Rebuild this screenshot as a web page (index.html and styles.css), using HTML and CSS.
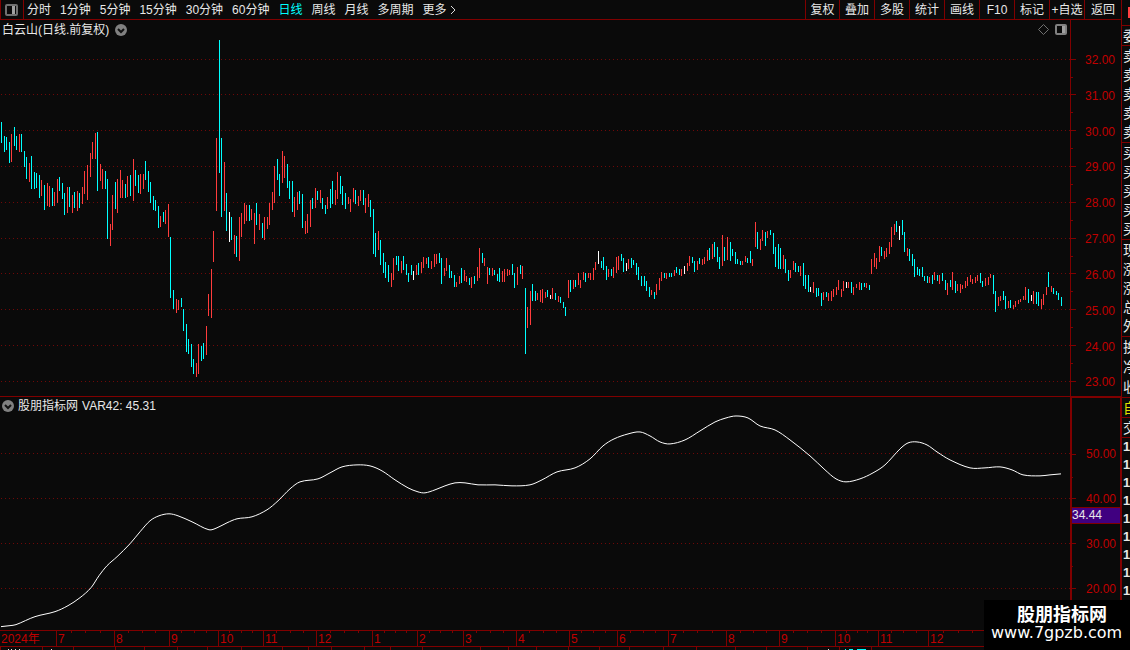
FILE: index.html
```
<!DOCTYPE html>
<html lang="zh-CN">
<head>
    <meta charset="UTF-8">
    <title>白云山 日线</title>
    <link rel="stylesheet" href="styles.css">
</head>
<body>
    <div class="app">
        <div class="main">
            <header class="toolbar">
                <button class="layout-btn" aria-label="Layout">
                    <svg width="13" height="12" viewBox="0 0 13 12"><rect x="1" y="1" width="11" height="10" rx="1" fill="none" stroke="#707070" stroke-width="2"/><rect x="7" y="2" width="3" height="8" fill="#a0a0a0"/></svg>
                </button>
                <nav class="periods">
                    <button>分时</button>
                    <button>1分钟</button>
                    <button>5分钟</button>
                    <button>15分钟</button>
                    <button>30分钟</button>
                    <button>60分钟</button>
                    <button class="active">日线</button>
                    <button>周线</button>
                    <button>月线</button>
                    <button>多周期</button>
                    <button class="more">更多<svg width="6" height="10" viewBox="0 0 6 10"><path d="M1 1L5 5L1 9" fill="none" stroke="#dcdcdc"/></svg></button>
                </nav>
                <nav class="tools">
                    <button>复权</button>
                    <button>叠加</button>
                    <button>多股</button>
                    <button>统计</button>
                    <button>画线</button>
                    <button>F10</button>
                    <button>标记</button>
                    <button>+自选</button>
                    <button>返回</button>
                </nav>
            </header>

            <section class="pane price">
                <div class="plot">
                    <svg class="chart" viewBox="0 20 1070 376" preserveAspectRatio="none">
                        <defs>
                            <pattern id="dots" width="4" height="1" patternUnits="userSpaceOnUse"><rect x="1" width="1" height="1" fill="#700808"/></pattern>
                        </defs>
                        <g id="price-grid"></g>
                        <path id="up" class="up"/>
                        <path id="down" class="down"/>
                        <path id="flat" class="flat"/>
                    </svg>
                    <div class="pane-head">
                        <span>白云山(日线.前复权)</span>
                        <button class="fold" aria-label="Options"><svg width="12" height="12" viewBox="0 0 12 12"><circle cx="6" cy="6" r="6" fill="#808080"/><path d="M3 5L6 8L9 5" fill="none" stroke="#111" stroke-width="2"/></svg></button>
                        <span class="spacer"></span>
                        <svg width="11" height="11" viewBox="0 0 11 11"><path d="M5.5 .5L10.500 5.500L5.500 10.500L.5 5.500Z" fill="none" stroke="#707070"/></svg>
                        <svg width="12" height="11" viewBox="0 0 12 11"><rect x="1" y="1" width="10" height="9" rx="1" fill="none" stroke="#808080" stroke-width="2"/><rect x="7" y="2" width="3" height="7" fill="#a0a0a0"/></svg>
                    </div>
                </div>
                <div class="axis">
                    <svg class="ticks" id="price-ticks" viewBox="0 20 5 376" preserveAspectRatio="none"></svg>
                    <span>32.00</span><span>31.00</span><span>30.00</span><span>29.00</span><span>28.00</span>
                    <span>27.00</span><span>26.00</span><span>25.00</span><span>24.00</span><span>23.00</span>
                </div>
            </section>

            <section class="pane indicator">
                <div class="plot">
                    <svg class="chart" viewBox="0 397 1070 233" preserveAspectRatio="none">
                        <g id="ind-grid"></g>
                        <path id="curve" class="curve"/>
                    </svg>
                    <div class="pane-head">
                        <button class="fold" aria-label="Options"><svg width="12" height="12" viewBox="0 0 12 12"><circle cx="6" cy="6" r="6" fill="#808080"/><path d="M3 5L6 8L9 5" fill="none" stroke="#111" stroke-width="2"/></svg></button>
                        <span>股朋指标网</span>
                        <span>VAR42: 45.31</span>
                    </div>
                </div>
                <div class="axis">
                    <svg class="ticks" id="ind-ticks" viewBox="0 397 5 233" preserveAspectRatio="none"></svg>
                    <span>50.00</span><span>40.00</span><span>30.00</span><span>20.00</span>
                    <div class="cursor-value">34.44</div>
                </div>
            </section>

            <section class="timeline">
                <svg class="ticks" id="time-ticks" viewBox="0 0 1121 15" preserveAspectRatio="none"></svg>
                <span>2024年</span><span>7</span><span>8</span><span>9</span><span>10</span><span>11</span><span>12</span>
                <span>1</span><span>2</span><span>3</span><span>4</span><span>5</span><span>6</span><span>7</span>
                <span>8</span><span>9</span><span>10</span><span>11</span><span>12</span>
            </section>

            <footer class="tabs-edge">
                <svg id="tabs" viewBox="0 0 1121 3" preserveAspectRatio="none"></svg>
            </footer>
        </div>

        <aside class="quotes">
            <div class="badge"></div>
            <div class="group tight"><span>委</span></div>
            <div class="group five"><span>卖</span><span>卖</span><span>卖</span><span>卖</span><span>卖</span></div>
            <div class="group five"><span>买</span><span>买</span><span>买</span><span>买</span><span>买</span></div>
            <div class="group five"><span>现</span><span>涨</span><span>涨</span><span>总</span><span>外</span></div>
            <div class="group three"><span>换</span><span>净</span><span>收</span></div>
            <div class="group tight self"><span>自</span></div>
            <div class="group tight"><span>交</span></div>
            <div class="group trades"><b>1</b><b>1</b><b>1</b><b>1</b><b>1</b><b>1</b><b>1</b><b>1</b><b>1</b></div>
        </aside>
    </div>

    <div class="watermark">
        <strong>股朋指标网</strong>
        <span>www.7gpzb.com</span>
    </div>
    <script src="chart.js"></script>
</body>
</html>
```
FILE: styles.css
```
* {
    box-sizing: border-box;
}
body {
    margin: 0;
    background: #0a0a0a;
    color: #e8e8e8;
    font-family: "Liberation Sans", "Noto Sans CJK SC", sans-serif;
    font-size: 12px;
    line-height: 16px;
    overflow: hidden;
}
button {
    background: none;
    border: 0;
    padding: 0;
    color: inherit;
    font: inherit;
    white-space: nowrap;
    cursor: pointer;
}
svg {
    display: block;
    flex: none;
}
.app {
    display: flex;
    height: 100vh;
}
.main {
    flex: 1;
    min-width: 0;
    display: flex;
    flex-direction: column;
}

/* toolbar */
.toolbar {
    display: flex;
    height: 20px;
    flex: none;
    border-bottom: 1px solid #800000;
}
.layout-btn {
    width: 24px;
    padding-left: 4px;
    border-left: 1px solid #800000;
    border-right: 1px solid #800000;
}
.periods {
    display: flex;
    gap: 9px;
    padding-left: 3px;
    flex: 1;
}
.periods .active {
    color: #00ffff;
}
.more {
    display: flex;
    align-items: center;
    gap: 3px;
}
.tools {
    display: flex;
}
.tools button {
    width: 35px;
    border-left: 1px solid #800000;
}
.tools button:first-child {
    width: 34px;
}
.tools button:last-child {
    width: 37px;
}

/* chart panes */
.pane {
    display: flex;
    min-height: 0;
}
.price {
    flex: 377;
    border-bottom: 1px solid #800000;
}
.indicator {
    flex: 233;
}
.plot {
    flex: 1;
    min-width: 0;
    position: relative;
}
.chart {
    position: absolute;
    width: 100%;
    height: 100%;
    shape-rendering: crispEdges;
}
.up {
    fill: #ff3c3c;
}
.down {
    fill: #00ffff;
}
.flat {
    fill: #ffffff;
}
.curve {
    fill: none;
    stroke: #ffffff;
}
.pane-head {
    position: relative;
    display: flex;
    align-items: center;
    gap: 6px;
    height: 19px;
    padding: 0 3px 0 2px;
}
.indicator .pane-head {
    gap: 4px;
    height: 17px;
}
.spacer {
    flex: 1;
}
.axis {
    position: relative;
    width: 51px;
    display: flex;
    flex-direction: column;
    justify-content: space-between;
    align-items: flex-end;
    padding: 32px 6px 6px 0;
    border-left: 1px solid #800000;
    color: #c00000;
}
.indicator .axis {
    padding: 48px 4px 33px 0;
    border-left-width: 2px;
    border-right: 1px solid #800000;
    border-top: 1px solid #800000;
}
.ticks {
    position: absolute;
    left: 0;
    top: 0;
    width: 5px;
    height: 100%;
    fill: #800000;
    shape-rendering: crispEdges;
}
.cursor-value {
    position: absolute;
    left: 0;
    right: 0;
    top: 47%;
    border-top: 1px solid #800000;
    border-bottom: 1px solid #800000;
    background: #400080;
    color: #e8e8e8;
    line-height: 15px;
}

/* month scale */
.timeline {
    position: relative;
    flex: none;
    display: grid;
    grid-template-columns: 56fr 58fr 55fr 49fr 45fr 53fr 56fr 45fr 46fr 53fr 53fr 48fr 51fr 58fr 53fr 56fr 43fr 50fr 193fr;
    height: 17px;
    border-top: 1px solid #800000;
    border-bottom: 1px solid #800000;
    color: #c00000;
}
.timeline span {
    padding-left: 1px;
    border-left: 1px solid #800000;
    min-width: 0;
}
.timeline span:first-of-type {
    border-left: 0;
}
.timeline .ticks {
    width: 100%;
}
.tabs-edge {
    flex: none;
    height: 3px;
}
.tabs-edge svg {
    width: 100%;
    height: 3px;
    shape-rendering: crispEdges;
}

/* quote column, mostly cut off by the window */
.quotes {
    width: 9px;
    flex: none;
    overflow: hidden;
    border-left: 1px solid #800000;
    font-size: 14px;
}
.badge {
    height: 18px;
    margin: 7px 0 0 6px;
    border-top: 11px solid #ff4040;
}
.group {
    display: flex;
    flex-direction: column;
    justify-content: space-around;
    border-top: 1px solid #800000;
    padding-left: 1px;
    white-space: nowrap;
}
.tight {
    height: 20px;
}
.five {
    height: 97px;
}
.three {
    height: 61px;
}
.self {
    color: #e0e000;
}
.trades b {
    font-size: 13px;
    line-height: 18px;
}

.watermark {
    position: fixed;
    right: 0;
    bottom: 0;
    width: 146px;
    height: 50px;
    padding: 5px 0 0 7px;
    background: #000;
    color: #fff;
}
.watermark strong {
    display: block;
    padding-left: 26px;
    font-size: 18px;
    line-height: 20px;
}
.watermark span {
    display: block;
    font-family: "DejaVu Sans", sans-serif;
    font-size: 16px;
    line-height: 16px;
}
```
FILE: chart.js
```
// one bar per day: x, high, low, r = up / c = down / w = flat
const bars = `
1 122 143 c,4 136 152 c,6 137 150 c,9 142 163 c,11 134 162 r,14 127 146 c,16 136 150 c,19 134 152 r,21 134 152 c,24 151 167 c,
26 157 179 c,29 163 182 r,31 156 189 c,34 172 189 c,36 173 188 c,39 175 198 c,41 180 196 r,44 185 210 c,47 183 206 r,49 186 207 r,
52 188 206 c,54 192 206 r,57 179 203 r,59 177 191 c,62 183 199 c,64 193 215 c,67 187 213 r,69 187 207 c,72 195 213 r,74 192 208 c,
77 191 211 r,79 193 208 c,82 187 204 r,84 171 194 r,87 165 200 r,90 153 177 r,92 142 159 r,95 133 159 r,97 132 191 c,100 164 181 r,
102 169 189 r,105 171 189 c,107 179 239 c,110 224 246 r,112 195 230 r,115 182 209 c,117 179 213 r,120 170 198 r,122 180 198 r,125 184 198 c,
127 176 197 r,130 175 196 c,133 159 201 r,135 170 186 c,138 175 193 c,140 174 194 r,143 174 189 r,145 161 180 c,148 171 192 c,150 182 203 c,
153 196 210 c,155 200 211 c,158 206 228 c,160 216 227 r,163 212 222 c,165 210 224 r,168 204 237 r,170 237 298 c,173 290 309 c,176 299 313 r,
178 300 310 r,181 298 307 c,183 309 331 c,186 324 352 c,188 339 354 c,191 344 367 c,193 359 374 c,196 363 377 r,198 344 374 r,201 346 361 c,
203 343 359 c,206 326 355 r,208 294 316 r,211 269 318 r,213 231 262 r,216 138 211 r,219 40 173 c,221 138 217 c,224 162 211 r,226 193 231 c,
229 212 242 w,231 217 240 c,234 235 254 r,236 236 257 c,239 217 261 r,241 213 237 r,244 203 224 r,246 205 221 r,249 205 221 c,251 209 220 r,
254 213 244 r,256 203 225 c,259 214 230 r,262 223 238 c,264 217 240 r,267 217 229 r,269 203 225 r,272 192 210 r,274 166 203 r,277 159 180 c,
279 174 196 c,282 151 183 r,284 156 178 r,287 164 188 c,289 181 199 c,292 181 212 c,294 197 217 r,297 192 210 r,299 191 204 c,302 194 228 c,
305 221 234 r,307 214 233 r,310 200 227 r,312 198 209 c,315 188 208 r,317 191 200 c,320 190 203 r,322 198 209 c,325 205 214 c,327 197 209 r,
330 189 208 c,332 181 204 c,335 190 205 r,337 172 199 r,340 176 194 c,342 186 205 c,345 193 209 c,348 197 204 r,350 199 212 r,353 188 202 r,
355 190 204 c,358 196 206 r,360 190 201 r,363 190 205 c,365 198 213 r,368 194 207 r,370 200 217 c,373 209 254 c,375 233 257 c,378 231 250 r,
380 240 265 c,383 253 273 c,385 262 278 c,388 265 282 c,391 273 287 r,393 258 280 r,396 256 265 c,398 256 271 c,401 261 273 r,403 256 270 c,
406 264 275 c,408 273 282 c,411 265 275 c,413 271 280 w,416 265 275 r,418 263 275 c,421 262 273 r,423 257 268 r,426 258 264 r,428 257 268 c,
431 261 269 r,434 254 267 r,436 254 264 r,439 253 263 c,441 258 284 c,444 268 276 r,446 258 271 r,449 265 278 c,451 271 278 c,454 275 287 c,
456 282 287 r,459 276 284 r,461 268 283 c,464 270 281 r,466 276 282 r,469 278 285 c,471 277 288 r,474 276 284 c,477 267 281 r,479 248 278 r,
482 253 263 c,484 258 266 r,487 267 284 r,489 268 275 c,492 268 276 r,494 270 275 c,497 274 281 c,499 268 282 c,502 271 282 r,504 269 282 r,
507 269 276 r,509 270 275 r,512 264 275 c,514 273 288 c,517 267 285 r,520 265 274 c,522 266 279 r,525 288 354 c,527 307 328 r,530 291 325 r,
532 284 301 c,535 291 301 c,537 293 300 r,540 290 302 r,542 289 303 r,545 292 298 r,547 290 297 c,550 295 299 w,552 288 299 r,555 293 300 c,
558 296 302 r,560 297 303 c,563 302 308 c,565 307 316 c,568 280 298 r,570 280 292 c,573 280 289 r,575 280 287 c,578 273 285 r,580 280 288 r,
583 272 280 r,585 273 282 c,588 273 278 r,590 273 280 r,593 268 280 r,595 262 270 r,598 251 264 w,601 261 268 c,603 257 270 c,606 266 280 c,
608 269 277 r,611 269 276 c,613 267 278 r,616 257 273 r,618 256 270 r,621 254 261 c,623 258 272 c,626 263 271 w,628 259 269 r,631 258 268 c,
633 260 265 c,636 263 275 c,638 267 280 c,641 276 286 c,644 276 286 c,646 281 291 c,649 287 297 c,651 290 295 r,654 292 299 c,656 284 295 r,
659 278 290 r,661 272 281 r,664 273 278 c,666 273 279 r,669 273 277 c,671 273 277 c,674 270 276 r,676 267 273 c,679 269 275 c,681 269 276 r,
684 266 274 w,687 263 271 r,689 256 266 r,692 257 263 c,694 261 272 c,697 261 270 r,699 258 264 c,702 259 265 r,704 257 264 r,707 250 261 r,
709 248 260 c,712 244 259 r,714 242 257 c,717 247 262 c,719 257 269 c,722 235 266 r,724 247 261 c,727 237 260 r,730 242 261 c,732 249 256 c,
735 252 264 c,737 259 264 c,740 261 265 c,742 261 265 r,745 256 262 r,747 258 263 c,750 251 263 c,752 259 266 r,755 222 247 r,757 232 249 c,
760 239 250 r,762 230 241 r,765 232 246 c,767 231 238 r,770 230 235 c,773 233 254 c,775 247 267 c,778 244 269 c,780 248 269 c,783 255 269 r,
785 259 273 c,788 270 281 c,790 270 278 r,793 261 270 r,795 263 272 c,798 266 272 c,800 266 276 r,803 263 286 c,805 275 289 c,808 275 292 c,
810 287 292 w,813 282 293 r,816 288 297 c,818 288 296 c,821 293 306 c,823 292 300 r,826 292 297 c,828 293 301 r,831 291 301 r,833 289 297 r,
836 287 295 r,838 280 290 r,841 289 297 r,843 281 291 r,846 282 288 w,848 282 288 r,851 282 293 c,853 287 295 r,856 284 288 r,859 282 290 r,
861 283 290 c,864 283 287 c,866 283 288 r,869 285 290 c,871 259 274 r,874 253 267 r,876 258 269 r,879 246 262 r,881 247 256 c,884 251 259 r,
886 248 257 r,889 242 254 r,891 227 247 r,894 224 235 r,896 221 232 c,899 226 240 w,902 220 235 c,904 232 252 c,907 248 256 r,909 249 261 c,
912 254 266 c,914 259 277 c,917 267 275 c,919 269 276 c,922 267 277 c,924 276 281 c,927 276 283 c,929 277 283 r,932 275 284 c,934 272 280 r,
937 275 281 c,939 275 284 r,942 273 281 c,945 280 290 c,947 283 295 r,950 280 287 c,952 272 290 r,955 281 293 c,957 284 291 r,960 284 293 r,
962 285 289 r,965 281 288 r,967 277 286 r,970 275 282 r,972 279 284 r,975 277 283 r,977 275 281 r,980 273 283 c,982 281 287 c,985 278 286 r,
988 277 285 r,990 274 278 r,993 275 294 c,995 291 312 c,998 297 306 r,1000 296 301 r,1003 291 300 c,1005 296 309 c,1008 301 308 r,1010 300 308 c,
1013 305 309 r,1015 301 307 r,1018 300 304 r,1020 299 302 r,1023 296 300 r,1025 287 300 r,1028 289 303 c,1031 295 301 w,1033 291 304 r,1036 292 304 c,
1038 292 306 c,1041 299 309 r,1043 294 305 r,1046 287 295 r,1048 272 287 c,1051 286 292 r,1053 288 294 c,1056 291 295 c,1058 293 300 c,1061 297 306 c`;

const curve = "1,627 10,626 16,625 35,617 55,612 68,606 80,598 91,588 99,576 107,566 117,557 130,544 140,532 150,521 159,516 169,514 178,516 192,522 209,530 217,528 227,523 237,519 252,517 267,510 278,501 290,489 300,482 318,479 330,473 342,467 357,465 370,466 382,471 395,480 408,488 418,492 425,493 435,490 445,486 455,483 465,483 478,485 495,485 512,486 530,485 542,480 557,472 575,468 590,459 603,446 614,439 628,434 640,432 650,436 660,442 670,444 685,440 700,431 715,422 726,418 736,416 748,418 760,426 775,430 790,440 810,456 825,470 836,479 846,482 860,479 873,473 885,465 900,449 908,443 917,442 927,445 937,452 950,460 970,468 985,468 1000,467 1012,470 1023,475 1040,476 1050,475 1061,474";

const paths = { r: "", c: "", w: "" };
bars.split(",").forEach(bar => {
    const [x, high, low, type] = bar.trim().split(" ");
    paths[type] += `M${x} ${high}h1V${low}h-1z`;
});
document.getElementById("up").setAttribute("d", paths.r);
document.getElementById("down").setAttribute("d", paths.c);
document.getElementById("flat").setAttribute("d", paths.w);

// smooth line through the points
function smooth(text) {
    const p = text.split(" ").map(s => s.split(",").map(Number));
    let d = `M${p[0]}`;
    for (let i = 0; i < p.length - 1; i++) {
        const a = p[i - 1] || p[i], b = p[i], c = p[i + 1], e = p[i + 2] || c;
        const h = (c[0] - b[0]) / 3;
        const s1 = (c[1] - a[1]) / (c[0] - a[0]);
        const s2 = (e[1] - b[1]) / (e[0] - b[0]);
        d += `C${b[0] + h} ${b[1] + s1 * h} ${c[0] - h} ${c[1] - s2 * h} ${c[0]} ${c[1]}`;
    }
    return d;
}
document.getElementById("curve").setAttribute("d", smooth(curve));

function rect(x, y, w, h, fill) {
    return `<rect x="${x}" y="${y}" width="${w}" height="${h}"${fill ? ` fill="${fill}"` : ""}/>`;
}
function draw(id, items) {
    document.getElementById(id).innerHTML = items.join("");
}

const priceRows = [59, 94, 130, 166, 202, 238, 273, 309, 345, 381];
const priceHalves = [77, 112, 148, 184, 220, 256, 291, 327, 363];
const indRows = [453, 498, 543, 588];
const indHalves = [476, 566];
draw("price-grid", priceRows.map(y => rect(0, y, 1070, 1, "url(#dots)")));
draw("ind-grid", indRows.map(y => rect(0, y, 1070, 1, "url(#dots)")));
draw("price-ticks", [...priceRows.map(y => rect(0, y, 5, 1)), ...priceHalves.map(y => rect(0, y, 2, 1))]);
draw("ind-ticks", [...indRows.map(y => rect(0, y, 4, 1)), ...indHalves.map(y => rect(0, y, 1, 1))]);

const weeks = [71, 85, 100, 128, 142, 155, 181, 194, 206, 229, 241, 252, 276, 290, 303, 330, 344, 358, 384, 395, 406, 429, 440, 452, 476, 490, 503, 529, 543, 556, 581, 593, 605, 630, 643, 655, 683, 697, 712, 740, 753, 766, 793, 807, 821, 846, 857, 867, 891, 903, 916, 943, 958, 972];
draw("time-ticks", weeks.map(x => rect(x, 0, 1, 2)));

// top edge of the tab row below the chart
const tabs = [0, 42, 73, 115, 144, 177, 207, 241, 282, 308, 331, 364, 390, 422, 480, 508, 536, 568, 599, 629, 663, 696, 735, 766, 807, 839, 871];
const caps = [[8, 1], [11, 1], [15, 1], [19, 1], [51, 1], [828, 1]];
draw("tabs", [
    ...tabs.map(x => rect(x, 0, 1, 3, "#800000")),
    ...caps.map(([x, w]) => rect(x, 2, w, 1, "#e0e0e0")),
    rect(845, 2, 1, 1, "#00ffff"), rect(849, 2, 4, 1, "#00ffff"), rect(857, 2, 9, 1, "#00ffff")
]);
```
